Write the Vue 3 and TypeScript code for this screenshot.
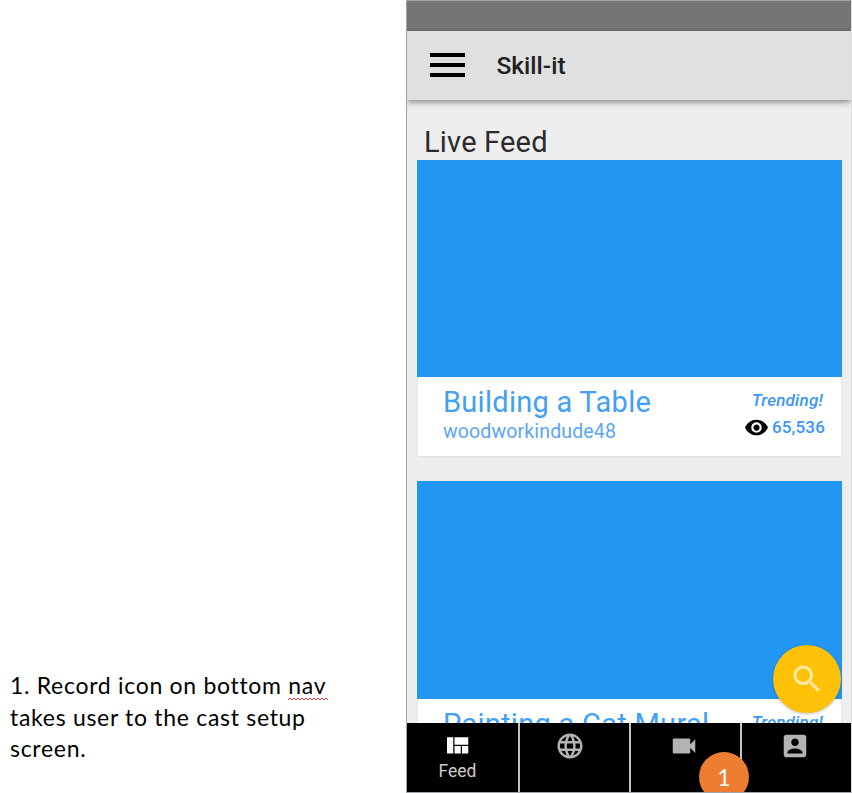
<script setup lang="ts">
interface Cast {
  title: string
  author: string
  views: string
}

interface Tab {
  name: string
  label?: string
  path: string
}

const casts: Cast[] = [
  { title: 'Building a Table', author: 'woodworkindude48', views: '65,536' },
  { title: 'Painting a Cat Mural', author: '', views: '' },
]

const tabs: Tab[] = [
  { name: 'home', label: 'Feed', path: 'M10 18h5v-6h-5v6zm-6 0h5V5H4v13zm12 0h5v-6h-5v6zM10 5v6h11V5H10z' },
  {
    name: 'explore',
    path: 'M11.99 2C6.47 2 2 6.48 2 12s4.47 10 9.99 10C17.52 22 22 17.52 22 12S17.52 2 11.99 2zm6.93 6h-2.95c-.32-1.25-.78-2.45-1.38-3.56 1.84.63 3.37 1.91 4.33 3.56zM12 4.04c.83 1.2 1.48 2.53 1.91 3.96h-3.82c.43-1.43 1.08-2.76 1.91-3.96zM4.26 14C4.1 13.36 4 12.69 4 12s.1-1.36.26-2h3.38c-.08.66-.14 1.32-.14 2 0 .68.06 1.34.14 2H4.26zm.82 2h2.95c.32 1.25.78 2.45 1.38 3.56-1.84-.63-3.37-1.9-4.33-3.56zm2.95-8H5.08c.96-1.66 2.49-2.93 4.33-3.56C8.81 5.55 8.35 6.75 8.03 8zM12 19.96c-.83-1.2-1.48-2.53-1.91-3.96h3.82c-.43 1.43-1.08 2.76-1.91 3.96zM14.34 14H9.66c-.09-.66-.16-1.32-.16-2 0-.68.07-1.35.16-2h4.68c.09.65.16 1.32.16 2 0 .68-.07 1.34-.16 2zm.25 5.56c.6-1.11 1.06-2.31 1.38-3.56h2.95c-.96 1.65-2.49 2.93-4.33 3.56zM16.36 14c.08-.66.14-1.32.14-2 0-.68-.06-1.34-.14-2h3.38c.16.64.26 1.31.26 2s-.1 1.36-.26 2h-3.38z',
  },
  {
    name: 'record',
    path: 'M17 10.5V7c0-.55-.45-1-1-1H4c-.55 0-1 .45-1 1v10c0 .55.45 1 1 1h12c.55 0 1-.45 1-1v-3.5l4 4v-11l-4 4z',
  },
  {
    name: 'profile',
    path: 'M3 5v14c0 1.1.89 2 2 2h14c1.1 0 2-.9 2-2V5c0-1.1-.9-2-2-2H5c-1.11 0-2 .9-2 2zm12 4c0 1.66-1.34 3-3 3s-3-1.34-3-3 1.34-3 3-3 3 1.34 3 3zm-9 8c0-2 4-3.1 6-3.1s6 1.1 6 3.1v1H6v-1z',
  },
]
</script>

<template>
  <main class="slide">
    <p class="note">
      <span class="line">1. Record icon on bottom <span class="misspelt">nav<svg class="squiggle" viewBox="0 0 40 4"><path d="M0 3l2-2 2 2 2-2 2 2 2-2 2 2 2-2 2 2 2-2 2 2 2-2 2 2 2-2 2 2 2-2 2 2 2-2 2 2 2-2 2 2" /></svg></span></span>
      <span class="line">takes user to the cast setup</span>
      <span class="line">screen.</span>
    </p>

    <section class="phone">
      <div class="status"></div>
      <header class="bar">
        <div class="menu"><i></i><i></i><i></i></div>
        <h1>Skill-it</h1>
      </header>
      <div class="feed">
        <h2>Live Feed</h2>
        <article v-for="cast in casts" :key="cast.title" class="card">
          <div class="cover"></div>
          <div class="info">
            <div class="about">
              <div class="title">{{ cast.title }}</div>
              <div class="author">{{ cast.author }}</div>
            </div>
            <div class="stats">
              <div class="trending">Trending!</div>
              <div v-if="cast.views" class="views">
                <svg viewBox="0 0 24 24"><path d="M12 4.5C7 4.5 2.73 7.61 1 12c1.73 4.39 6 7.5 11 7.5s9.27-3.11 11-7.5c-1.73-4.39-6-7.5-11-7.5zM12 17c-2.76 0-5-2.24-5-5s2.24-5 5-5 5 2.24 5 5-2.24 5-5 5zm0-8c-1.66 0-3 1.34-3 3s1.34 3 3 3 3-1.34 3-3-1.34-3-3-3z" /></svg>
                <span>{{ cast.views }}</span>
              </div>
            </div>
          </div>
        </article>
      </div>
      <nav class="tabs">
        <div v-for="tab in tabs" :key="tab.name" class="tab" :class="[tab.name, { active: tab.label }]">
          <svg viewBox="0 0 24 24"><path :d="tab.path" /></svg>
          <span v-if="tab.label">{{ tab.label }}</span>
        </div>
      </nav>
      <div class="search">
        <svg viewBox="0 0 24 24"><path d="M15.5 14h-.79l-.28-.27C15.41 12.59 16 11.11 16 9.5 16 5.91 13.09 3 9.5 3S3 5.91 3 9.5 5.91 16 9.5 16c1.61 0 3.09-.59 4.23-1.57l.27.28v.79l5 4.99L20.49 19l-4.99-5zm-6 0C7.01 14 5 11.99 5 9.5S7.01 5 9.5 5 14 7.01 14 9.5 11.99 14 9.5 14z" /></svg>
      </div>
      <div class="marker">1</div>
    </section>
  </main>
</template>

<style>
body {
  margin: 0;
  background: #fff;
}
</style>

<style scoped>
.slide {
  display: flex;
  width: 852px;
  height: 793px;
  overflow: hidden;
  font-family: Roboto, sans-serif;
}
.note {
  box-sizing: border-box;
  width: 406px;
  margin: 0;
  padding: 670px 0 0 10px;
  font: 23px/31.5px Lato, sans-serif;
  letter-spacing: 0.7px;
  color: #000;
  white-space: nowrap;
}
.line {
  display: block;
}
.misspelt {
  position: relative;
}
.squiggle {
  position: absolute;
  left: 0;
  bottom: -2px;
  width: 40px;
  height: 4px;
}
.squiggle path {
  fill: none;
  stroke: #f03a3a;
  stroke-width: 1;
}
.phone {
  position: relative;
  box-sizing: border-box;
  display: flex;
  flex-direction: column;
  width: 446px;
  height: 793px;
  overflow: hidden;
  border: 1px solid #a0a4a8;
  border-right-color: #ddd;
  background: #eee;
}
.status {
  flex: none;
  height: 30px;
  background: #757575;
}
.bar {
  position: relative;
  flex: none;
  display: flex;
  align-items: center;
  height: 69px;
  padding-left: 23px;
  background: #e0e0e0;
  box-shadow: 0 2px 6px rgba(0, 0, 0, 0.45);
}
.menu {
  display: flex;
  flex-direction: column;
  gap: 6.5px;
  width: 35px;
  margin-right: 31.5px;
  padding-bottom: 1px;
}
.menu i {
  height: 3.5px;
  background: #000;
}
h1 {
  margin: 0;
  font-size: 24.5px;
  font-weight: 500;
  line-height: 30px;
  color: #212121;
}
.feed {
  flex: 1;
  min-height: 0;
  overflow: hidden;
  padding: 24px 9px 0 10px;
}
h2 {
  height: 36px;
  margin: 0 0 0 7px;
  font-size: 29px;
  font-weight: 400;
  line-height: 37px;
  letter-spacing: 0.2px;
  color: #2b2b2b;
}
.card {
  margin-bottom: 25px;
}
.cover {
  height: 217px;
  background: #2196f3;
}
.card + .card .cover {
  height: 218px;
}
.info {
  display: flex;
  justify-content: space-between;
  box-sizing: border-box;
  height: 79px;
  margin: 0 1px;
  padding: 7px 16px 0 25px;
  background: #fff;
  box-shadow: 0 1px 2px rgba(0, 0, 0, 0.08);
}
.title {
  font-size: 29px;
  line-height: 36px;
  letter-spacing: 0.28px;
  color: #42a0f5;
  white-space: nowrap;
}
.author {
  font-size: 19.5px;
  line-height: 24px;
  letter-spacing: 0.15px;
  color: #5ba5f6;
}
.stats {
  color: #3a97f3;
  font-size: 17px;
  font-weight: 500;
}
.trending {
  margin-right: 2px;
  font-style: italic;
  line-height: 32px;
  letter-spacing: 0.2px;
  text-align: right;
}
.views {
  display: flex;
  align-items: center;
  justify-content: flex-end;
  gap: 3px;
  height: 22px;
  letter-spacing: 0.15px;
}
.views svg {
  width: 25px;
  height: 25px;
  fill: #000;
}
.tabs {
  position: relative;
  flex: none;
  display: grid;
  grid-template-columns: 111px 109.5px 109.5px 1fr;
  gap: 1.5px;
  height: 69px;
  background: #c4c4c4;
}
.tab {
  display: flex;
  flex-direction: column;
  align-items: center;
  padding: 7.5px 2px 0 0;
  background: #000;
  color: #ccc;
  font-size: 17.5px;
  line-height: 21px;
}
.home {
  padding-right: 10px;
}
.home svg {
  margin-right: 2px;
}
.explore {
  padding-right: 8px;
}
.tab svg {
  flex: none;
  width: 30px;
  height: 30px;
  fill: #b3b3b3;
}
.active svg {
  fill: #fff;
}
.search {
  position: absolute;
  left: 366px;
  top: 644px;
  display: flex;
  align-items: center;
  justify-content: center;
  width: 68px;
  height: 68px;
  border-radius: 50%;
  background: #ffc107;
  box-shadow: 0 1px 3px rgba(0, 0, 0, 0.25);
}
.search svg {
  width: 36px;
  height: 36px;
  fill: #ffeaa5;
}
.marker {
  position: absolute;
  left: 292px;
  top: 751px;
  width: 50px;
  height: 50px;
  border-radius: 50%;
  background: #ed7d31;
  color: #fff;
  font: 23px/51px Lato, sans-serif;
  text-align: center;
}
</style>
